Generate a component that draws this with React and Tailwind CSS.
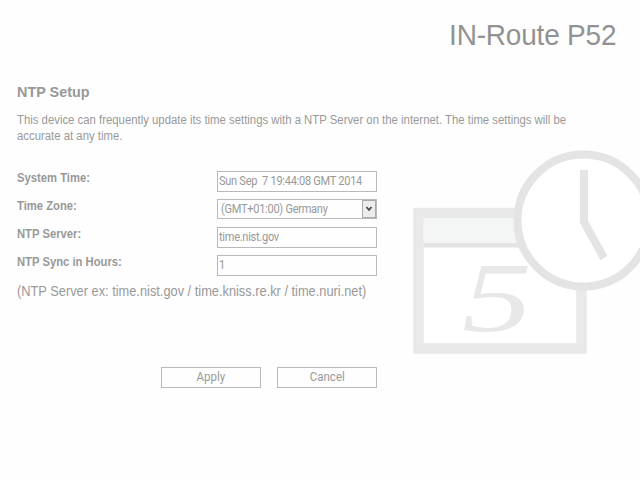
function Field({ label, children }) {
  return (
    <div className="flex h-7 items-start">
      <label className="w-[200px] origin-left scale-x-[0.937] text-[12px] leading-[14px] font-bold whitespace-nowrap">{label}</label>
      {children}
    </div>
  );
}

function TextBox({ value }) {
  return (
    <div className="h-[21px] w-[160px] border border-[#b9b9b9] pl-px font-['Roboto',sans-serif] text-[12px] leading-[19px] tracking-[-0.3px] whitespace-pre">
      <span className="inline-block origin-left scale-x-[0.92]">{value}</span>
    </div>
  );
}

function FormButton({ children }) {
  return (
    <button type="button" className="h-[21px] w-[100px] border border-[#b9b9b9] font-['Roboto',sans-serif] text-[12px] leading-[19px]">
      <span className="inline-block scale-x-[0.96]">{children}</span>
    </button>
  );
}

function CalendarClock() {
  return (
    <svg className="block shrink-0" width="240" height="210" viewBox="400 150 240 210">
      <rect x="418.500" y="213" width="163" height="135.500" fill="#fff" stroke="#e9e9e9" strokeWidth="10.500" />
      <rect x="423.700" y="218" width="153" height="25" fill="#f4f5f5" />
      <rect x="423.700" y="243" width="153" height="4.500" fill="#e4e4e4" />
      <text
        transform="translate(462 330.500) scale(1.400 1)"
        fontFamily="Liberation Serif, serif"
        fontStyle="italic"
        fontSize="100"
        fill="#e8e8e8"
      >
        5
      </text>
      <circle cx="583.500" cy="220.500" r="66" fill="#fff" stroke="#e4e4e4" strokeWidth="8" />
      <path d="M584 170V222L604 258" fill="none" stroke="#e4e4e4" strokeWidth="8" />
    </svg>
  );
}

export default function App() {
  return (
    <div className="h-[480px] w-[640px] overflow-hidden bg-[#fefefe] font-['Liberation_Sans',Arial,sans-serif] text-[#999]">
      <header className="flex h-[84px] justify-end pt-[18px] pr-6">
        <h1 className="origin-right scale-x-[0.965] text-[29px] leading-[34px] tracking-[-0.2px] whitespace-nowrap text-[#929292]">IN-Route P52</h1>
      </header>
      <section className="h-[66px] pl-[17px]">
        <h2 className="origin-left scale-x-[0.96] text-[15px] leading-4 font-bold">NTP Setup</h2>
        <p className="origin-left scale-x-[0.946] pt-3 text-[12px] leading-4 whitespace-nowrap">
          This device can frequently update its time settings with a NTP Server on the internet. The time settings will be
          <br />
          accurate at any time.
        </p>
      </section>
      <main className="flex">
        <form className="w-[400px] pt-[21px] pl-[17px]">
          <Field label="System Time:">
            <TextBox value="Sun Sep  7 19:44:08 GMT 2014" />
          </Field>
          <Field label="Time Zone:">
            <div className="flex h-[20px] w-[160px] justify-between border border-[#b9b9b9] pl-[3px] font-['Roboto',sans-serif] text-[12px] leading-[19px] tracking-[-0.3px] whitespace-nowrap">
              <span className="inline-block origin-left scale-x-[0.92]">(GMT+01:00) Germany</span>
              <span className="flex w-[14px] items-center justify-center border border-[#aaa] bg-[#ececec]">
                <svg width="8" height="6" viewBox="0 0 8 6">
                  <path d="M1.500 1L4 4L6.500 1" fill="none" stroke="#444" strokeWidth="1.700" />
                </svg>
              </span>
            </div>
          </Field>
          <Field label="NTP Server:">
            <TextBox value="time.nist.gov" />
          </Field>
          <Field label="NTP Sync in Hours:">
            <TextBox value="1" />
          </Field>
          <p className="origin-left text-[14px] leading-4 whitespace-nowrap">
            <span className="inline-block origin-left scale-x-[0.915]">(NTP Server ex: time.nist.gov / time.kniss.re.kr / time.nuri.net)</span>
          </p>
          <div className="flex gap-4 pt-[68px] pl-36">
            <FormButton>Apply</FormButton>
            <FormButton>Cancel</FormButton>
          </div>
        </form>
        <CalendarClock />
      </main>
    </div>
  );
}
